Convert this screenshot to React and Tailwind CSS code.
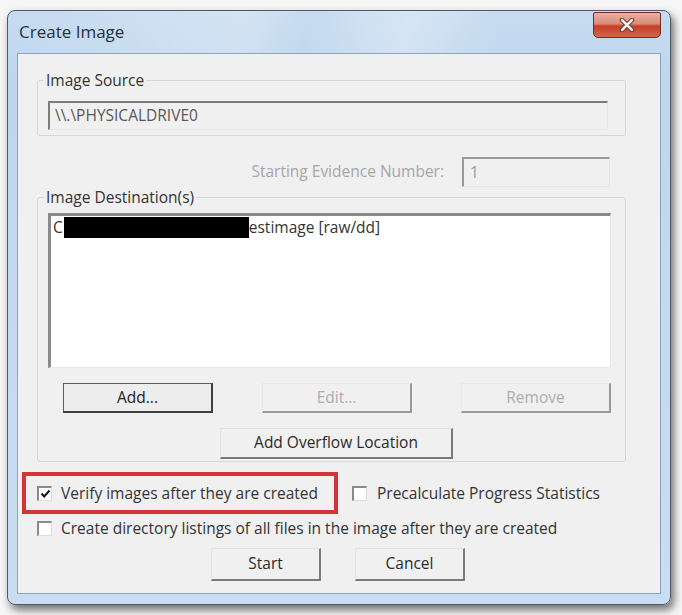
export default function App() {
  return (
    <div className="w-[682px] h-[615px] bg-[#f6f6f6] pt-[10px] pl-[7px] [font-family:'Open_Sans',sans-serif] text-[15.5px] text-[#333333]">
      {/* Window frame */}
      <div className="w-[664px] h-[595px] rounded-[8px] border border-[#4f5b68] bg-[linear-gradient(180deg,#c6dbf0_0%,#bfd6ee_12%,#c9ddf2_100%)] shadow-[3px_5px_9px_rgba(0,0,0,0.55)] flex flex-col px-[9px] pb-[10px]">
        {/* Title bar */}
        <div className="h-[42px] flex items-start justify-between bg-[linear-gradient(100deg,transparent_0%,rgba(255,255,255,0.25)_35%,transparent_45%,rgba(255,255,255,0.3)_60%,transparent_75%)]">
          <span className="mt-[10px] pl-[2px] text-[17px] leading-[22px] text-[#26303b]">Create Image</span>
          <div className="w-[68px] h-[26px] mt-[1px] rounded-b-[5px] rounded-t-[2px] border border-[#6b2e22] bg-[linear-gradient(180deg,#eab0a2_0%,#d98a76_45%,#c43f27_55%,#d4664a_100%)] flex items-center justify-center">
            <svg width="16" height="14" viewBox="0 0 16 14">
              <path d="M3 2 L13 12 M13 2 L3 12" stroke="#5a2a20" strokeWidth="4.5" strokeLinecap="round" />
              <path d="M3 2 L13 12 M13 2 L3 12" stroke="#f4f0ee" strokeWidth="2.6" strokeLinecap="round" />
            </svg>
          </div>
        </div>

        {/* Client area */}
        <div className="flex-1 border border-[#8fa4bb] bg-[#f0f0f0] flex flex-col">
          {/* Image Source */}
          <fieldset className="mt-[16px] ml-[19px] w-[589px] border border-[#d4d8dc] rounded-[3px] pl-[10px] pr-[17px] pb-[5px]">
            <legend className="-ml-[4px] px-[2px] leading-[20px]">Image Source</legend>
            <div className="mt-[11px] h-[29px] border-t-2 border-l-2 border-t-[#7c7c7c] border-l-[#7c7c7c] border-r border-b border-r-[#e6e6e6] border-b-[#e6e6e6] bg-[#f0f0f0] flex items-center pl-[5px] text-[#585858]">
              {"\\\\.\\PHYSICALDRIVE0"}
            </div>
          </fieldset>

          {/* Starting evidence number */}
          <div className="mt-[21px] h-[30px] flex items-center justify-end pr-[50px] gap-[18px]">
            <span className="text-[#a6a6a6]">Starting Evidence Number:</span>
            <div className="w-[148px] h-[30px] border-t-2 border-l-2 border-t-[#9a9a9a] border-l-[#9a9a9a] border-r border-b border-r-[#e6e6e6] border-b-[#e6e6e6] bg-[#f0f0f0] flex items-center pl-[6px] text-[#9a9a9a]">
              1
            </div>
          </div>

          {/* Image Destination(s) */}
          <fieldset className="ml-[19px] w-[589px] border border-[#d4d8dc] rounded-[3px] pl-[10px] pr-[14px] pb-[2px]">
            <legend className="-ml-[4px] px-[2px] leading-[20px]">Image Destination(s)</legend>
            <div className="mt-[6px] h-[155px] bg-white border-t-[3px] border-l-[3px] border-t-[#8a8a8a] border-l-[#8a8a8a] border-r border-b border-r-[#e8e8e8] border-b-[#e8e8e8] pt-[1px] pl-[2px]">
              <div className="flex items-center leading-[21px]">
                <span>C</span>
                <span className="inline-block ml-[1px] w-[185px] h-[21px] bg-black" />
                <span>estimage [raw/dd]</span>
              </div>
            </div>
            <div className="mt-[15px] flex justify-between pl-[15px]">
              <button className="w-[150px] h-[30px] bg-[#ededed] border border-[#5e5e5e] border-b-2 border-r-2 border-b-[#404040] border-r-[#404040] text-[#222]">Add...</button>
              <button className="w-[150px] h-[30px] bg-[#f0f0f0] border border-t-[#e8e8e8] border-l-[#e8e8e8] border-b-2 border-r-2 border-b-[#9a9a9a] border-r-[#9a9a9a] text-[#adadad]">Edit...</button>
              <button className="w-[150px] h-[30px] bg-[#f0f0f0] border border-t-[#e8e8e8] border-l-[#e8e8e8] border-b-2 border-r-2 border-b-[#9a9a9a] border-r-[#9a9a9a] text-[#adadad]">Remove</button>
            </div>
            <div className="mt-[15px] ml-[172px]">
              <button className="w-[233px] h-[31px] bg-[#f0f0f0] border border-t-[#e4e4e4] border-l-[#e4e4e4] border-b-2 border-r-2 border-b-[#7a7a7a] border-r-[#7a7a7a] text-[#2a2a2a]">Add Overflow Location</button>
            </div>
          </fieldset>

          {/* Options */}
          <div className="mt-[10px] ml-[4px] flex items-center leading-[20px]">
            <div className="h-[42px] w-[316px] border-[4px] border-[#d2343a] flex items-center pl-[11px] gap-[9px]">
              <span className="w-[15px] h-[15px] bg-white border-t-2 border-l-2 border-t-[#8a8a8a] border-l-[#8a8a8a] border-r border-b border-r-[#dcdcdc] border-b-[#dcdcdc] flex items-center justify-center">
                <svg width="11" height="10" viewBox="0 0 11 10">
                  <path d="M1.5 4.5 L4.2 7.5 L9.5 1.5" stroke="#111" strokeWidth="2" fill="none" />
                </svg>
              </span>
              <span className="whitespace-nowrap">Verify images after they are created</span>
            </div>
            <div className="ml-[14px] flex items-center gap-[10px]">
              <span className="w-[15px] h-[15px] bg-white border-t-2 border-l-2 border-t-[#8a8a8a] border-l-[#8a8a8a] border-r border-b border-r-[#dcdcdc] border-b-[#dcdcdc]" />
              <span className="whitespace-nowrap">Precalculate Progress Statistics</span>
            </div>
          </div>
          <div className="mt-[4px] ml-[19px] flex items-center gap-[9px] leading-[20px]">
            <span className="w-[15px] h-[15px] bg-white border-t-2 border-l-2 border-t-[#8a8a8a] border-l-[#8a8a8a] border-r border-b border-r-[#dcdcdc] border-b-[#dcdcdc]" />
            <span className="whitespace-nowrap">Create directory listings of all files in the image after they are created</span>
          </div>

          {/* Dialog buttons */}
          <div className="mt-[10px] ml-[193px] flex gap-[34px]">
            <button className="w-[110px] h-[33px] bg-[#f0f0f0] border border-t-[#e4e4e4] border-l-[#e4e4e4] border-b-2 border-r-2 border-b-[#7a7a7a] border-r-[#7a7a7a] text-[#2a2a2a]">Start</button>
            <button className="w-[110px] h-[33px] bg-[#f0f0f0] border border-t-[#e4e4e4] border-l-[#e4e4e4] border-b-2 border-r-2 border-b-[#7a7a7a] border-r-[#7a7a7a] text-[#2a2a2a]">Cancel</button>
          </div>
        </div>
      </div>
    </div>
  );
}
